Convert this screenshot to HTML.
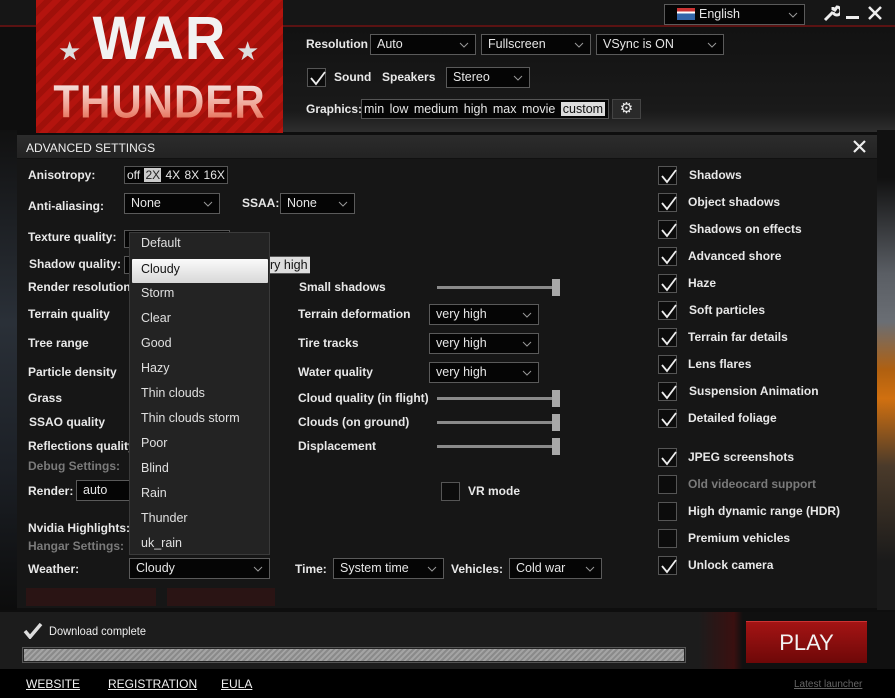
<!DOCTYPE html>
<html><head><meta charset="utf-8"><style>
*{margin:0;padding:0;box-sizing:border-box}
body{width:895px;height:698px;overflow:hidden;background:#0e0e0e;font-family:"Liberation Sans",Arial,sans-serif;color:#e6e6e6;position:relative}
.a{position:absolute}
.l{position:absolute;font-size:12px;font-weight:bold;line-height:14px;white-space:nowrap;color:#e8e8e8}
.g{color:#7a7a7a}
.s{position:absolute;height:21px;background:#050505;border:1px solid #5a5a5a;font-size:12.5px;line-height:19px;padding-left:6px;color:#e6e6e6;white-space:nowrap}
.s svg{position:absolute;right:6px;top:7px}
.cb{position:absolute;width:19px;height:19px;border:1px solid #555;background:#0c0c0c}
.cb svg{position:absolute;left:1px;top:0}
.sl{position:absolute;height:3px;background:#8a8a8a;width:116px}
.th{position:absolute;width:8px;height:17px;background:#a8a8a8}
.it{position:absolute;left:11px;font-size:12.5px;color:#e0e0e0;line-height:14px}
</style></head><body>
<div class="a" style="left:0;top:0;width:895px;height:26px;background:#161616"></div>
<div class="a" style="left:0;top:25px;width:895px;height:2px;background:#5a1212"></div>
<div class="a" style="left:283px;top:27px;width:612px;height:105px;background:linear-gradient(#121212,#1a1a1a 80%,#2e2e2e)"></div>
<div class="a" style="left:0;top:130px;width:17px;height:480px;background:linear-gradient(#111,#2a3038 40%,#1c2026 70%,#0c0c0c)"></div>
<div class="a" style="left:877px;top:130px;width:18px;height:480px;background:linear-gradient(#111 10%,#5a5e64 30%,#6a6e74 40%,#b06010 50%,#d07010 56%,#4a3a2a 70%,#1a1a1a 90%)"></div>
<!-- logo -->
<div class="a" style="left:36px;top:0;width:247px;height:133px;background:repeating-linear-gradient(135deg,#b4140e 0 6px,#a0100a 6px 12px);overflow:hidden">
 <div class="a" style="left:0;top:8px;width:247px;text-align:center;font:bold 56px/60px 'Liberation Sans',sans-serif;color:#f2f2f2;letter-spacing:1px;transform:scaleY(1.1)">WAR</div>
 <div class="a" style="left:22px;top:36px;font-size:26px;color:#ddd">★</div>
 <div class="a" style="left:200px;top:36px;font-size:26px;color:#ddd">★</div>
 <div class="a" style="left:0;top:80px;width:247px;text-align:center;font:bold 42px/44px 'Liberation Sans',sans-serif;letter-spacing:1px;transform:scaleY(1.1);background:linear-gradient(#f4f4f4,#f0a090 60%,#e05a40);-webkit-background-clip:text;color:transparent">THUNDER</div>
</div>
<!-- top right -->
<div class="s" style="left:664px;top:4px;width:141px;height:21px;padding-left:34px">English<svg width="10" height="6"><path d="M1 1l4 4 4-4" stroke="#999" fill="none"/></svg></div>
<div class="a" style="left:677px;top:8px;width:18px;height:12px;background:linear-gradient(#c33 0 30%,#fff 30% 45%,#36a 45%)"></div>
<svg class="a" style="left:822px;top:4px" width="18" height="18"><path d="M3 16l8-8M11 8a4 4 0 1 0 4-5l-2 3-2-1 0-2" stroke="#eee" stroke-width="3" fill="none"/></svg>
<div class="a" style="left:846px;top:16px;width:13px;height:3px;background:#eee"></div>
<svg class="a" style="left:868px;top:6px" width="14" height="14"><path d="M1 1l12 12M13 1L1 13" stroke="#eee" stroke-width="2.5"/></svg>
<!-- top settings -->
<div class="l" style="left:306px;top:37px">Resolution</div>
<div class="s" style="left:370px;top:34px;width:106px">Auto<svg width="10" height="6"><path d="M1 1l4 4 4-4" stroke="#999" fill="none"/></svg></div>
<div class="s" style="left:481px;top:34px;width:110px">Fullscreen<svg width="10" height="6"><path d="M1 1l4 4 4-4" stroke="#999" fill="none"/></svg></div>
<div class="s" style="left:596px;top:34px;width:128px">VSync is ON<svg width="10" height="6"><path d="M1 1l4 4 4-4" stroke="#999" fill="none"/></svg></div>
<div class="cb" style="left:307px;top:68px"><svg width="18" height="18"><path d="M2 9l5 6 9-12" stroke="#eee" stroke-width="1.8" fill="none"/></svg></div>
<div class="l" style="left:334px;top:70px">Sound</div>
<div class="l" style="left:382px;top:70px">Speakers</div>
<div class="s" style="left:446px;top:67px;width:84px">Stereo<svg width="10" height="6"><path d="M1 1l4 4 4-4" stroke="#999" fill="none"/></svg></div>
<div class="l" style="left:306px;top:102px">Graphics:</div>
<div class="a" style="left:361px;top:99px;width:248px;height:20px;border:1px solid #555;background:#050505;font-size:12.5px;line-height:18px;padding-left:2px;word-spacing:2px;white-space:nowrap">min low medium high max movie <span style="background:#ddd;color:#111;padding:0 2px">custom</span></div>
<div class="a" style="left:612px;top:99px;width:29px;height:20px;background:#2a2a2a;border:1px solid #444;color:#eee;font-size:15px;line-height:18px;text-align:center">⚙</div>
<!-- panel -->
<div class="a" style="left:17px;top:135px;width:860px;height:473px;background:#161616"></div>
<div class="a" style="left:17px;top:135px;width:860px;height:24px;background:linear-gradient(#2c2c2c,#232323);border-bottom:1px solid #111"></div>
<div class="l" style="left:26px;top:141px;font-weight:normal;font-size:12px;color:#eee">ADVANCED SETTINGS</div>
<svg class="a" style="left:853px;top:140px" width="13" height="13"><path d="M1 1l11 11M12 1L1 12" stroke="#eee" stroke-width="2.2"/></svg>
<div class="a" style="left:26px;top:588px;width:130px;height:18px;background:#2a1414"></div>
<div class="a" style="left:167px;top:588px;width:108px;height:18px;background:#2a1414"></div>
<!-- left col -->
<div class="l" style="left:28px;top:168px">Anisotropy:</div>
<div class="a" style="left:124px;top:166px;width:104px;height:18px;border:1px solid #555;background:#050505;font-size:12px;line-height:16px;padding-left:2px;word-spacing:1px;white-space:nowrap">off <span style="background:#ccc;color:#222;padding:0 1px">2X</span> 4X 8X 16X</div>
<div class="l" style="left:28px;top:199px">Anti-aliasing:</div>
<div class="s" style="left:124px;top:193px;width:96px">None<svg width="10" height="6"><path d="M1 1l4 4 4-4" stroke="#999" fill="none"/></svg></div>
<div class="l" style="left:242px;top:196px">SSAA:</div>
<div class="s" style="left:280px;top:193px;width:75px">None<svg width="10" height="6"><path d="M1 1l4 4 4-4" stroke="#999" fill="none"/></svg></div>
<div class="l" style="left:28px;top:230px">Texture quality:</div>
<div class="a" style="left:124px;top:230px;width:106px;height:18px;border:1px solid #555;background:#050505"></div>
<div class="l" style="left:29px;top:257px">Shadow quality:</div>
<div class="a" style="left:124px;top:256px;width:186px;height:18px;border:1px solid #555;background:#050505"></div>
<div class="a" style="left:270px;top:257px;width:40px;height:16px;background:#ddd;color:#111;font-size:12.5px;line-height:16px">ry high</div>
<div class="l" style="left:28px;top:280px">Render resolution</div>
<div class="l" style="left:28px;top:307px">Terrain quality</div>
<div class="l" style="left:28px;top:336px">Tree range</div>
<div class="l" style="left:28px;top:365px">Particle density</div>
<div class="l" style="left:28px;top:391px">Grass</div>
<div class="l" style="left:29px;top:415px">SSAO quality</div>
<div class="l" style="left:28px;top:439px">Reflections quality</div>
<div class="l g" style="left:28px;top:459px">Debug Settings:</div>
<div class="l" style="left:28px;top:484px">Render:</div>
<div class="s" style="left:76px;top:480px;width:60px">auto</div>
<div class="l" style="left:28px;top:521px">Nvidia Highlights:</div>
<div class="l g" style="left:28px;top:539px">Hangar Settings:</div>
<div class="l" style="left:28px;top:562px">Weather:</div>
<div class="s" style="left:129px;top:558px;width:141px">Cloudy<svg width="10" height="6"><path d="M1 1l4 4 4-4" stroke="#999" fill="none"/></svg></div>
<!-- middle col -->
<div class="l" style="left:299px;top:280px">Small shadows</div>
<div class="sl" style="left:437px;top:286px"></div><div class="th" style="left:552px;top:279px"></div>
<div class="l" style="left:298px;top:307px">Terrain deformation</div>
<div class="s" style="left:429px;top:304px;width:110px">very high<svg width="10" height="6"><path d="M1 1l4 4 4-4" stroke="#999" fill="none"/></svg></div>
<div class="l" style="left:298px;top:336px">Tire tracks</div>
<div class="s" style="left:429px;top:333px;width:110px">very high<svg width="10" height="6"><path d="M1 1l4 4 4-4" stroke="#999" fill="none"/></svg></div>
<div class="l" style="left:298px;top:365px">Water quality</div>
<div class="s" style="left:429px;top:362px;width:110px">very high<svg width="10" height="6"><path d="M1 1l4 4 4-4" stroke="#999" fill="none"/></svg></div>
<div class="l" style="left:298px;top:391px">Cloud quality (in flight)</div>
<div class="sl" style="left:437px;top:397px"></div><div class="th" style="left:552px;top:390px"></div>
<div class="l" style="left:298px;top:415px">Clouds (on ground)</div>
<div class="sl" style="left:437px;top:421px"></div><div class="th" style="left:552px;top:414px"></div>
<div class="l" style="left:298px;top:439px">Displacement</div>
<div class="sl" style="left:437px;top:445px"></div><div class="th" style="left:552px;top:438px"></div>
<div class="cb" style="left:441px;top:482px"></div>
<div class="l" style="left:468px;top:484px">VR mode</div>
<div class="l" style="left:295px;top:562px">Time:</div>
<div class="s" style="left:333px;top:558px;width:111px">System time<svg width="10" height="6"><path d="M1 1l4 4 4-4" stroke="#999" fill="none"/></svg></div>
<div class="l" style="left:451px;top:562px">Vehicles:</div>
<div class="s" style="left:509px;top:558px;width:93px">Cold war<svg width="10" height="6"><path d="M1 1l4 4 4-4" stroke="#999" fill="none"/></svg></div>
<!-- right col checkboxes -->
<div class="cb" style="left:658px;top:166px"><svg width="18" height="18"><path d="M2 9l5 6 9-12" stroke="#eee" stroke-width="1.8" fill="none"/></svg></div><div class="l" style="left:689px;top:168px">Shadows</div>
<div class="cb" style="left:658px;top:193px"><svg width="18" height="18"><path d="M2 9l5 6 9-12" stroke="#eee" stroke-width="1.8" fill="none"/></svg></div><div class="l" style="left:688px;top:195px">Object shadows</div>
<div class="cb" style="left:658px;top:220px"><svg width="18" height="18"><path d="M2 9l5 6 9-12" stroke="#eee" stroke-width="1.8" fill="none"/></svg></div><div class="l" style="left:689px;top:222px">Shadows on effects</div>
<div class="cb" style="left:658px;top:247px"><svg width="18" height="18"><path d="M2 9l5 6 9-12" stroke="#eee" stroke-width="1.8" fill="none"/></svg></div><div class="l" style="left:688px;top:249px">Advanced shore</div>
<div class="cb" style="left:658px;top:274px"><svg width="18" height="18"><path d="M2 9l5 6 9-12" stroke="#eee" stroke-width="1.8" fill="none"/></svg></div><div class="l" style="left:688px;top:276px">Haze</div>
<div class="cb" style="left:658px;top:301px"><svg width="18" height="18"><path d="M2 9l5 6 9-12" stroke="#eee" stroke-width="1.8" fill="none"/></svg></div><div class="l" style="left:689px;top:303px">Soft particles</div>
<div class="cb" style="left:658px;top:328px"><svg width="18" height="18"><path d="M2 9l5 6 9-12" stroke="#eee" stroke-width="1.8" fill="none"/></svg></div><div class="l" style="left:688px;top:330px">Terrain far details</div>
<div class="cb" style="left:658px;top:355px"><svg width="18" height="18"><path d="M2 9l5 6 9-12" stroke="#eee" stroke-width="1.8" fill="none"/></svg></div><div class="l" style="left:688px;top:357px">Lens flares</div>
<div class="cb" style="left:658px;top:382px"><svg width="18" height="18"><path d="M2 9l5 6 9-12" stroke="#eee" stroke-width="1.8" fill="none"/></svg></div><div class="l" style="left:689px;top:384px">Suspension Animation</div>
<div class="cb" style="left:658px;top:409px"><svg width="18" height="18"><path d="M2 9l5 6 9-12" stroke="#eee" stroke-width="1.8" fill="none"/></svg></div><div class="l" style="left:688px;top:411px">Detailed foliage</div>
<div class="cb" style="left:658px;top:448px"><svg width="18" height="18"><path d="M2 9l5 6 9-12" stroke="#eee" stroke-width="1.8" fill="none"/></svg></div><div class="l" style="left:688px;top:450px">JPEG screenshots</div>
<div class="cb" style="left:658px;top:475px"></div><div class="l g" style="left:688px;top:477px">Old videocard support</div>
<div class="cb" style="left:658px;top:502px"></div><div class="l" style="left:688px;top:504px">High dynamic range (HDR)</div>
<div class="cb" style="left:658px;top:529px"></div><div class="l" style="left:688px;top:531px">Premium vehicles</div>
<div class="cb" style="left:658px;top:556px"><svg width="18" height="18"><path d="M2 9l5 6 9-12" stroke="#eee" stroke-width="1.8" fill="none"/></svg></div><div class="l" style="left:688px;top:558px">Unlock camera</div>
<!-- dropdown list -->
<div class="a" style="left:129px;top:232px;width:141px;height:323px;background:#232323;border:1px solid #3a3a3a">
 <div class="a" style="left:2px;top:26px;width:136px;height:24px;background:linear-gradient(#fafafa,#d8d8d8);border-radius:1px"></div>
 <div class="it" style="top:3px">Default</div>
 <div class="it" style="top:29px;color:#111">Cloudy</div>
 <div class="it" style="top:53px">Storm</div>
 <div class="it" style="top:78px">Clear</div>
 <div class="it" style="top:103px">Good</div>
 <div class="it" style="top:128px">Hazy</div>
 <div class="it" style="top:153px">Thin clouds</div>
 <div class="it" style="top:178px">Thin clouds storm</div>
 <div class="it" style="top:203px">Poor</div>
 <div class="it" style="top:228px">Blind</div>
 <div class="it" style="top:253px">Rain</div>
 <div class="it" style="top:278px">Thunder</div>
 <div class="it" style="top:303px">uk_rain</div>
</div>
<!-- bottom -->
<div class="a" style="left:0;top:612px;width:895px;height:57px;background:linear-gradient(90deg,#1c1c1c 0,#1c1c1c 78%,#3a1010 82%,#101010 83%)"></div>
<svg class="a" style="left:23px;top:623px" width="20" height="16"><path d="M2 8l5 6 11-13" stroke="#ddd" stroke-width="3.5" fill="none"/></svg>
<div class="a" style="left:49px;top:624px;font-size:12px;color:#eee;transform:scaleX(.92);transform-origin:left">Download complete</div>
<div class="a" style="left:22px;top:647px;width:664px;height:16px;border:1px solid #555;background:repeating-linear-gradient(135deg,#8a8a8a 0 2px,#a4a4a4 2px 4px);box-shadow:inset 0 0 0 1px #222"></div>
<div class="a" style="left:746px;top:621px;width:121px;height:42px;background:linear-gradient(#a41414,#6e0808);border-top:1px solid #c33;color:#f2f2f2;font-size:22px;line-height:42px;text-align:center">PLAY</div>
<div class="a" style="left:0;top:669px;width:895px;height:29px;background:#000"></div>
<div class="a" style="left:26px;top:677px;font-size:12px;color:#f0f0f0;text-decoration:underline">WEBSITE</div>
<div class="a" style="left:108px;top:677px;font-size:12px;color:#f0f0f0;text-decoration:underline">REGISTRATION</div>
<div class="a" style="left:221px;top:677px;font-size:12px;color:#f0f0f0;text-decoration:underline">EULA</div>
<div class="a" style="left:794px;top:679px;font-size:10px;color:#666;text-decoration:underline">Latest launcher</div>
</body></html>
